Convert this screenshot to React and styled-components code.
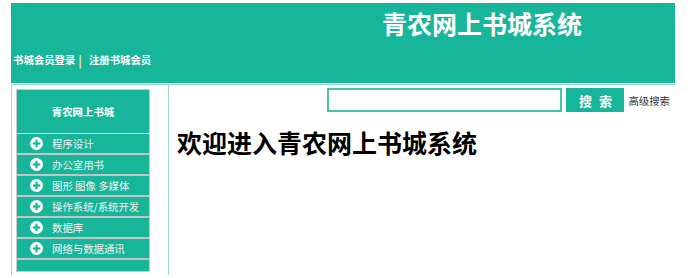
import React from 'react'
import styled, { createGlobalStyle } from 'styled-components'

const GREEN = '#17b69a'
const LINE = '#95dccb'

const categories = [
  '程序设计',
  '办公室用书',
  '图形 图像 多媒体',
  '操作系统/系统开发',
  '数据库',
  '网络与数据通讯'
]

const GlobalStyle = createGlobalStyle`
  body {
    margin: 0;
    background: #fff;
    font-family: "Noto Sans CJK SC", "Noto Sans", sans-serif;
  }
`

function PlusIcon() {
  return (
    <svg width="13" height="13" viewBox="0 0 13 13">
      <circle cx="6.5" cy="6.5" r="6.5" fill="#fff" />
      <rect x="5.4" y="2.8" width="2.2" height="7.4" fill={GREEN} />
      <rect x="2.8" y="5.4" width="7.4" height="2.2" fill={GREEN} />
    </svg>
  )
}

function App() {
  return (
    <Page>
      <GlobalStyle />
      <Header>
        <SiteTitle>青农网上书城系统</SiteTitle>
        <MemberLinks>
          <MemberLink>书城会员登录</MemberLink>
          <Divider>|</Divider>
          <MemberLink>注册书城会员</MemberLink>
        </MemberLinks>
      </Header>
      <Body>
        <SideColumn>
          <Sidebar>
            <SidebarTitle>青农网上书城</SidebarTitle>
            {categories.map(name => (
              <Category key={name}>
                <PlusIcon />
                <CategoryName>{name}</CategoryName>
              </Category>
            ))}
          </Sidebar>
        </SideColumn>
        <Main>
          <SearchBar>
            <SearchInput type="text" />
            <SearchButton type="button">搜 索</SearchButton>
            <AdvancedLink>高级搜索</AdvancedLink>
          </SearchBar>
          <Welcome>欢迎进入青农网上书城系统</Welcome>
        </Main>
      </Body>
    </Page>
  )
}

const Page = styled.div`
  width: 664px;
  padding: 3px 0 0 11px;
`

const Header = styled.div`
  height: 80px;
  background: ${GREEN};
  display: flex;
  flex-direction: column;
`

const SiteTitle = styled.h1`
  margin: 7px 0 0 371px;
  font-size: 25px;
  line-height: 27px;
  font-weight: bold;
  color: #fff;
`

const MemberLinks = styled.div`
  display: flex;
  align-items: center;
  margin: 16px 0 0 2px;
  font-size: 10.4px;
  line-height: 14px;
  font-weight: bold;
  color: #fff;
`

const MemberLink = styled.span`
  cursor: pointer;
`

const Divider = styled.span`
  margin: 0 7px 0 3px;
  color: #f3e7a8;
  font-size: 12px;
`

const Body = styled.div`
  display: flex;
  margin-top: 1px;
  height: 190px;
  border-top: 1px solid ${LINE};
  border-left: 1px solid ${LINE};
`

const SideColumn = styled.div`
  width: 157px;
  border-right: 1px solid ${LINE};
  padding: 4px 0 0 4px;
  box-sizing: border-box;
`

const Sidebar = styled.div`
  width: 134px;
  height: 183px;
  box-sizing: border-box;
  background: ${GREEN};
  border: 1px solid #c9c9c9;
`

const SidebarTitle = styled.div`
  height: 43px;
  display: flex;
  align-items: center;
  justify-content: center;
  font-size: 10.4px;
  font-weight: bold;
  color: #fff;
  border-bottom: 1px solid #d8f3ed;
`

const Category = styled.div`
  height: 19px;
  display: flex;
  align-items: center;
  padding-left: 13px;
  border-bottom: 2px solid #c4c4c4;
`

const CategoryName = styled.span`
  margin-left: 9px;
  font-size: 10.4px;
  color: #f2f2f2;
`

const Main = styled.div`
  flex: 1;
  display: flex;
  flex-direction: column;
  padding: 3px 5px 0 8px;
`

const SearchBar = styled.div`
  display: flex;
  align-items: center;
  justify-content: flex-end;
`

const SearchInput = styled.input`
  width: 235px;
  height: 24px;
  box-sizing: border-box;
  border: 2px solid #45c4ad;
  padding: 0 4px;
  outline: none;
`

const SearchButton = styled.button`
  width: 58px;
  height: 24px;
  margin-left: 4px;
  border: none;
  background: ${GREEN};
  color: #fff;
  font-family: inherit;
  font-size: 13px;
  font-weight: bold;
  letter-spacing: 2px;
  padding: 0 0 0 2px;
  white-space: pre;
  cursor: pointer;
`

const AdvancedLink = styled.span`
  margin-left: 4px;
  font-size: 10.4px;
  color: #333;
  cursor: pointer;
`

const Welcome = styled.h2`
  margin: 15px 0 0 0;
  font-size: 25px;
  line-height: 30px;
  font-weight: bold;
  color: #000;
`

export default App
